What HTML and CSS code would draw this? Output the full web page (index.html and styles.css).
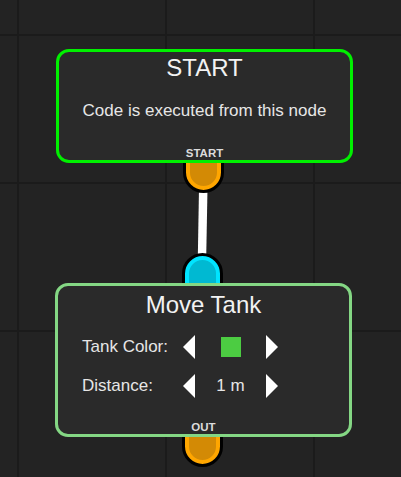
FILE: index.html
```html
<!DOCTYPE html>
<html>
<head>
<meta charset="utf-8">
<link rel="stylesheet" href="styles.css">
</head>
<body>
<div class="canvas">
  <div class="port port-orange port-start"></div>
  <div class="port port-cyan port-in"></div>
  <div class="port port-orange port-out"></div>
  <svg class="wire" width="401" height="477" viewBox="0 0 401 477">
    <polygon points="199,188 207.5,188 206.2,258 197.8,258" fill="#ffffff"/>
  </svg>

  <div class="node node-start">
    <div class="node-title">START</div>
    <div class="node-desc">Code is executed from this node</div>
    <div class="node-label">START</div>
  </div>

  <div class="node node-move">
    <div class="node-title">Move Tank</div>
    <div class="rows">
      <div class="row">
        <span class="row-label">Tank Color:</span>
        <svg class="arrow" width="12" height="24" viewBox="0 0 12 24"><polygon points="12,0 12,24 0,12" fill="#fff"/></svg>
        <span class="row-value"><span class="swatch"></span></span>
        <svg class="arrow" width="12" height="24" viewBox="0 0 12 24"><polygon points="0,0 0,24 12,12" fill="#fff"/></svg>
      </div>
      <div class="row">
        <span class="row-label">Distance:</span>
        <svg class="arrow" width="12" height="24" viewBox="0 0 12 24"><polygon points="12,0 12,24 0,12" fill="#fff"/></svg>
        <span class="row-value">1 m</span>
        <svg class="arrow" width="12" height="24" viewBox="0 0 12 24"><polygon points="0,0 0,24 12,12" fill="#fff"/></svg>
      </div>
    </div>
    <div class="node-label">OUT</div>
  </div>
</div>
</body>
</html>
```

FILE: styles.css
```css
html, body {
  margin: 0;
  padding: 0;
  background: #232323;
}

.canvas {
  position: relative;
  width: 401px;
  height: 477px;
  overflow: hidden;
  background-color: #232323;
  background-image:
    linear-gradient(to right, #1b1b1b 2px, transparent 2px),
    linear-gradient(to bottom, #1b1b1b 2px, transparent 2px);
  background-size: 148px 148px;
  background-position: 17px 34px;
  font-family: "Liberation Sans", Arial, sans-serif;
  color: #e8e8e8;
}

.wire {
  position: absolute;
  left: 0;
  top: 0;
  z-index: 1;
}

.port {
  position: absolute;
  box-sizing: border-box;
  width: 41px;
  border: 3px solid #000;
  border-radius: 21px;
  z-index: 2;
}

.port-orange {
  background: #d38a05;
  box-shadow: inset 0 0 0 4px #ffa600;
}

.port-cyan {
  background: #00b9d2;
  box-shadow: inset 0 0 0 4px #00e4ff;
}

.port-start {
  left: 183px;
  top: 140px;
  height: 53px;
}

.port-in {
  left: 182px;
  top: 253px;
  height: 55px;
}

.port-out {
  left: 182px;
  top: 414px;
  height: 53px;
}

.node {
  position: absolute;
  box-sizing: border-box;
  background: #2a2a2a;
  border: 3px solid;
  border-radius: 13px;
  display: flex;
  flex-direction: column;
  z-index: 3;
}

.node-start {
  left: 56px;
  top: 49px;
  width: 297px;
  height: 114px;
  border-color: #00f000;
  padding-top: 3px;
}

.node-move {
  left: 55px;
  top: 283px;
  width: 297px;
  height: 154px;
  border-color: #84d784;
  padding-top: 6px;
}

.node-title {
  font-size: 24px;
  line-height: 26px;
  text-align: center;
  color: #f2f2f2;
}

.node-desc {
  margin-top: 20px;
  font-size: 17px;
  line-height: 20px;
  text-align: center;
  color: #e6e6e6;
}

.node-label {
  margin-top: auto;
  font-size: 11.5px;
  font-weight: bold;
  line-height: 13px;
  text-align: center;
  color: #dcdcdc;
}

.rows {
  margin-top: 17px;
  padding-left: 24px;
  display: flex;
  flex-direction: column;
  gap: 15px;
}

.row {
  display: grid;
  grid-template-columns: 101px 12px 71px 12px;
  align-items: center;
  height: 24px;
  font-size: 17px;
  color: #e6e6e6;
}

.arrow {
  display: block;
}

.row-value {
  display: flex;
  justify-content: center;
  align-items: center;
}

.swatch {
  width: 20px;
  height: 20px;
  background: #4ccc42;
}
```
